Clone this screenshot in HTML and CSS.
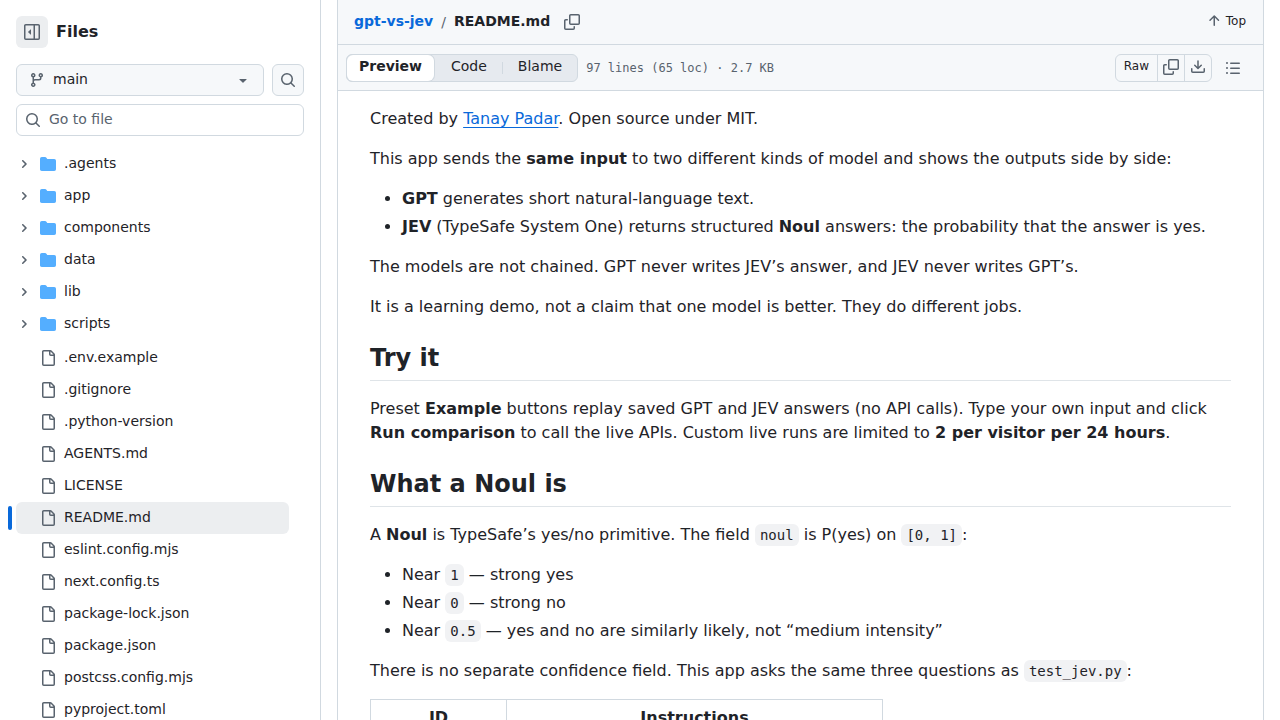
FILE: index.html
```html
<!DOCTYPE html>
<html lang="en">
<head>
<meta charset="utf-8">
<meta name="viewport" content="width=device-width, initial-scale=1">
<title>gpt-vs-jev/README.md</title>
<link rel="stylesheet" href="styles.css">
</head>
<body>
<svg class="sprite" aria-hidden="true">
  <symbol id="i-sidebar" viewBox="0 0 16 16"><path d="m4.177 7.823 2.396-2.396A.25.25 0 0 1 7 5.604v4.792a.25.25 0 0 1-.427.177L4.177 8.177a.25.25 0 0 1 0-.354Z"/><path d="M0 1.75C0 .784.784 0 1.75 0h12.5C15.216 0 16 .784 16 1.75v12.5A1.75 1.75 0 0 1 14.25 16H1.75A1.75 1.75 0 0 1 0 14.25Zm1.75-.25a.25.25 0 0 0-.25.25v12.5c0 .138.112.25.25.25H9.5v-13Zm12.5 13a.25.25 0 0 0 .25-.25V1.75a.25.25 0 0 0-.25-.25H11v13Z"/></symbol>
  <symbol id="i-branch" viewBox="0 0 16 16"><path d="M9.5 3.25a2.25 2.25 0 1 1 3 2.122V6A2.5 2.5 0 0 1 10 8.5H6a1 1 0 0 0-1 1v1.128a2.251 2.251 0 1 1-1.5 0V5.372a2.25 2.25 0 1 1 1.5 0v1.836A2.493 2.493 0 0 1 6 7h4a1 1 0 0 0 1-1v-.628A2.25 2.25 0 0 1 9.5 3.25Zm-6 0a.75.75 0 1 0 1.5 0 .75.75 0 0 0-1.5 0Zm8.25-.75a.75.75 0 1 0 0 1.5.75.75 0 0 0 0-1.5ZM4.25 12a.75.75 0 1 0 0 1.5.75.75 0 0 0 0-1.5Z"/></symbol>
  <symbol id="i-search" viewBox="0 0 16 16"><path d="M10.68 11.74a6 6 0 0 1-7.922-8.982 6 6 0 0 1 8.982 7.922l3.04 3.04a.749.749 0 0 1-.326 1.275.749.749 0 0 1-.734-.215ZM11.5 7a4.499 4.499 0 1 0-8.997 0A4.499 4.499 0 0 0 11.5 7Z"/></symbol>
  <symbol id="i-caret" viewBox="0 0 16 16"><path d="m4.427 7.427 3.396 3.396a.25.25 0 0 0 .354 0l3.396-3.396A.25.25 0 0 0 11.396 7H4.604a.25.25 0 0 0-.177.427Z"/></symbol>
  <symbol id="i-chevron" viewBox="0 0 12 12"><path d="M4.7 10c-.2 0-.4-.1-.5-.2-.3-.3-.3-.8 0-1.1L6.9 6 4.2 3.3c-.3-.3-.3-.8 0-1.1.3-.3.8-.3 1.1 0l3.3 3.2c.3.3.3.8 0 1.1L5.3 9.7c-.2.2-.4.3-.6.3Z"/></symbol>
  <symbol id="i-folder" viewBox="0 0 16 16"><path d="M1.75 1A1.75 1.75 0 0 0 0 2.75v10.5C0 14.216.784 15 1.75 15h12.5A1.75 1.75 0 0 0 16 13.25v-8.5A1.75 1.75 0 0 0 14.25 3H7.5a.25.25 0 0 1-.2-.1l-.9-1.2C6.07 1.26 5.55 1 5 1H1.75Z"/></symbol>
  <symbol id="i-file" viewBox="0 0 16 16"><path d="M2 1.75C2 .784 2.784 0 3.75 0h6.586c.464 0 .909.184 1.237.513l2.914 2.914c.329.328.513.773.513 1.237v9.586A1.75 1.75 0 0 1 13.25 16h-9.5A1.75 1.75 0 0 1 2 14.25Zm1.75-.25a.25.25 0 0 0-.25.25v12.5c0 .138.112.25.25.25h9.5a.25.25 0 0 0 .25-.25V6h-2.75A1.75 1.75 0 0 1 9 4.25V1.5Zm6.75.062V4.25c0 .138.112.25.25.25h2.688l-.011-.013-2.914-2.914-.013-.011Z"/></symbol>
  <symbol id="i-copy" viewBox="0 0 16 16"><path d="M0 6.75C0 5.784.784 5 1.75 5h1.5a.75.75 0 0 1 0 1.5h-1.5a.25.25 0 0 0-.25.25v7.5c0 .138.112.25.25.25h7.5a.25.25 0 0 0 .25-.25v-1.5a.75.75 0 0 1 1.5 0v1.5A1.75 1.75 0 0 1 9.25 16h-7.5A1.75 1.75 0 0 1 0 14.25Z"/><path d="M5 1.75C5 .784 5.784 0 6.75 0h7.5C15.216 0 16 .784 16 1.75v7.5A1.75 1.75 0 0 1 14.25 11h-7.5A1.75 1.75 0 0 1 5 9.25Zm1.75-.25a.25.25 0 0 0-.25.25v7.5c0 .138.112.25.25.25h7.5a.25.25 0 0 0 .25-.25v-7.5a.25.25 0 0 0-.25-.25Z"/></symbol>
  <symbol id="i-download" viewBox="0 0 16 16"><path d="M2.75 14A1.75 1.75 0 0 1 1 12.25v-2.5a.75.75 0 0 1 1.5 0v2.5c0 .138.112.25.25.25h10.5a.25.25 0 0 0 .25-.25v-2.5a.75.75 0 0 1 1.5 0v2.5A1.75 1.75 0 0 1 13.25 14Z"/><path d="M7.25 7.689V2a.75.75 0 0 1 1.5 0v5.689l1.97-1.969a.749.749 0 1 1 1.06 1.06l-3.25 3.25a.749.749 0 0 1-1.06 0L4.22 6.78a.749.749 0 1 1 1.06-1.06l1.97 1.969Z"/></symbol>
  <symbol id="i-list" viewBox="0 0 16 16"><path d="M5.75 2.5h8.5a.75.75 0 0 1 0 1.5h-8.5a.75.75 0 0 1 0-1.5Zm0 5h8.5a.75.75 0 0 1 0 1.5h-8.5a.75.75 0 0 1 0-1.5Zm0 5h8.5a.75.75 0 0 1 0 1.5h-8.5a.75.75 0 0 1 0-1.5ZM2 14a1 1 0 1 1 0-2 1 1 0 0 1 0 2Zm1-6a1 1 0 1 1-2 0 1 1 0 0 1 2 0ZM2 4a1 1 0 1 1 0-2 1 1 0 0 1 0 2Z"/></symbol>
  <symbol id="i-up" viewBox="0 0 16 16"><path d="M3.47 7.78a.75.75 0 0 1 0-1.06l4.25-4.25a.75.75 0 0 1 1.06 0l4.25 4.25a.751.751 0 0 1-.018 1.042.751.751 0 0 1-1.042.018L9 4.81v7.44a.75.75 0 0 1-1.5 0V4.81L4.53 7.78a.75.75 0 0 1-1.06 0Z"/></symbol>
</svg>

<div class="layout">
  <aside class="sidebar">
    <div class="sidebar-head">
      <button class="icon-button filled" type="button" aria-label="Collapse file tree"><svg class="icon"><use href="#i-sidebar"/></svg></button>
      <h2 class="sidebar-title">Files</h2>
    </div>
    <div class="branch-row">
      <div class="field branch">
        <svg class="icon"><use href="#i-branch"/></svg>
        <select class="branch-select" aria-label="Branch"><option>main</option></select>
        <svg class="icon"><use href="#i-caret"/></svg>
      </div>
      <button class="icon-button outlined" type="button" aria-label="Search this repository"><svg class="icon"><use href="#i-search"/></svg></button>
    </div>
    <div class="field finder">
      <svg class="icon"><use href="#i-search"/></svg>
      <input class="finder-input" type="text" placeholder="Go to file" aria-label="Go to file">
    </div>
    <nav class="tree" aria-label="File tree">
      <ul class="tree-group">
        <li><a class="row" href="#"><svg class="chevron"><use href="#i-chevron"/></svg><svg class="icon folder"><use href="#i-folder"/></svg><span class="row-name">.agents</span></a></li>
        <li><a class="row" href="#"><svg class="chevron"><use href="#i-chevron"/></svg><svg class="icon folder"><use href="#i-folder"/></svg><span class="row-name">app</span></a></li>
        <li><a class="row" href="#"><svg class="chevron"><use href="#i-chevron"/></svg><svg class="icon folder"><use href="#i-folder"/></svg><span class="row-name">components</span></a></li>
        <li><a class="row" href="#"><svg class="chevron"><use href="#i-chevron"/></svg><svg class="icon folder"><use href="#i-folder"/></svg><span class="row-name">data</span></a></li>
        <li><a class="row" href="#"><svg class="chevron"><use href="#i-chevron"/></svg><svg class="icon folder"><use href="#i-folder"/></svg><span class="row-name">lib</span></a></li>
        <li><a class="row" href="#"><svg class="chevron"><use href="#i-chevron"/></svg><svg class="icon folder"><use href="#i-folder"/></svg><span class="row-name">scripts</span></a></li>
      </ul>
      <ul class="tree-group">
        <li><a class="row file" href="#"><svg class="icon"><use href="#i-file"/></svg><span class="row-name">.env.example</span></a></li>
        <li><a class="row file" href="#"><svg class="icon"><use href="#i-file"/></svg><span class="row-name">.gitignore</span></a></li>
        <li><a class="row file" href="#"><svg class="icon"><use href="#i-file"/></svg><span class="row-name">.python-version</span></a></li>
        <li><a class="row file" href="#"><svg class="icon"><use href="#i-file"/></svg><span class="row-name">AGENTS.md</span></a></li>
        <li><a class="row file" href="#"><svg class="icon"><use href="#i-file"/></svg><span class="row-name">LICENSE</span></a></li>
        <li><a class="row file current" href="#" aria-current="page"><svg class="icon"><use href="#i-file"/></svg><span class="row-name">README.md</span></a></li>
        <li><a class="row file" href="#"><svg class="icon"><use href="#i-file"/></svg><span class="row-name">eslint.config.mjs</span></a></li>
        <li><a class="row file" href="#"><svg class="icon"><use href="#i-file"/></svg><span class="row-name">next.config.ts</span></a></li>
        <li><a class="row file" href="#"><svg class="icon"><use href="#i-file"/></svg><span class="row-name">package-lock.json</span></a></li>
        <li><a class="row file" href="#"><svg class="icon"><use href="#i-file"/></svg><span class="row-name">package.json</span></a></li>
        <li><a class="row file" href="#"><svg class="icon"><use href="#i-file"/></svg><span class="row-name">postcss.config.mjs</span></a></li>
        <li><a class="row file" href="#"><svg class="icon"><use href="#i-file"/></svg><span class="row-name">pyproject.toml</span></a></li>
      </ul>
    </nav>
  </aside>

  <main class="content">
    <section class="file-view">
      <header class="path-bar">
        <div class="crumbs">
          <a class="crumb-link" href="#">gpt-vs-jev</a>
          <span class="crumb-sep">/</span>
          <h1 class="crumb-file">README.md</h1>
          <button class="bare-button copy-path" type="button" aria-label="Copy path"><svg class="icon"><use href="#i-copy"/></svg></button>
        </div>
        <a class="top-link" href="#"><svg class="icon"><use href="#i-up"/></svg><span>Top</span></a>
      </header>
      <div class="tool-bar">
        <div class="segments">
          <button class="segment active" type="button" aria-pressed="true">Preview</button>
          <button class="segment" type="button">Code</button>
          <span class="segment-divider"></span>
          <button class="segment" type="button">Blame</button>
        </div>
        <span class="file-meta">97 lines (65 loc) · 2.7 KB</span>
        <div class="actions">
          <button class="action raw" type="button">Raw</button>
          <button class="action" type="button" aria-label="Copy raw file"><svg class="icon"><use href="#i-copy"/></svg></button>
          <button class="action" type="button" aria-label="Download raw file"><svg class="icon"><use href="#i-download"/></svg></button>
        </div>
        <button class="bare-button outline" type="button" aria-label="Outline"><svg class="icon"><use href="#i-list"/></svg></button>
      </div>
      <article class="markdown">
        <p>Created by <a href="#">Tanay Padar</a>. Open source under MIT.</p>
        <p>This app sends the <strong>same input</strong> to two different kinds of model and shows the outputs side by side:</p>
        <ul>
          <li><strong>GPT</strong> generates short natural-language text.</li>
          <li><strong>JEV</strong> (TypeSafe System One) returns structured <strong>Noul</strong> answers: the probability that the answer is yes.</li>
        </ul>
        <p>The models are not chained. GPT never writes JEV’s answer, and JEV never writes GPT’s.</p>
        <p>It is a learning demo, not a claim that one model is better. They do different jobs.</p>
        <h2>Try it</h2>
        <p>Preset <strong>Example</strong> buttons replay saved GPT and JEV answers (no API calls). Type your own input and click <strong>Run comparison</strong> to call the live APIs. Custom live runs are limited to <strong>2 per visitor per 24 hours</strong>.</p>
        <h2>What a Noul is</h2>
        <p>A <strong>Noul</strong> is TypeSafe’s yes/no primitive. The field <code>noul</code> is P(yes) on <code>[0, 1]</code>:</p>
        <ul>
          <li>Near <code>1</code> — strong yes</li>
          <li>Near <code>0</code> — strong no</li>
          <li>Near <code>0.5</code> — yes and no are similarly likely, not “medium intensity”</li>
        </ul>
        <p>There is no separate confidence field. This app asks the same three questions as <code>test_jev.py</code>:</p>
        <table>
          <thead><tr><th class="col-id" scope="col">ID</th><th class="col-text" scope="col">Instructions</th></tr></thead>
        </table>
      </article>
    </section>
  </main>
</div>
</body>
</html>
```
FILE: styles.css
```css
:root {
  --fg: #1f2328;
  --muted: #59636e;
  --line: #d1d9e0;
  --line-soft: #dfe4e8;
  --subtle: #f6f8fa;
  --link: #0969da;
  --sans: "DejaVu Sans", sans-serif;
  --mono: "DejaVu Sans Mono", monospace;
}

* { box-sizing: border-box; }

body {
  margin: 0;
  color: var(--fg);
  background: #fff;
  font: 14px/20px var(--sans);
}

button, input, select { font: inherit; color: inherit; }
button { cursor: pointer; }
ul { list-style: none; margin: 0; padding: 0; }
a { color: var(--link); text-decoration: none; }

.sprite { display: none; }
.icon { flex: none; display: block; width: 16px; height: 16px; fill: var(--muted); }

.layout {
  display: grid;
  grid-template-columns: 321px minmax(0, 1fr);
  height: 100vh;
  overflow: hidden;
}

/* File tree */
.sidebar {
  padding: 16px 16px 0;
  border-right: 1px solid var(--line);
  overflow: hidden;
}
.sidebar-head { display: flex; align-items: center; gap: 8px; margin-bottom: 16px; }
.sidebar-title { margin: 0; font-size: 16px; line-height: 24px; font-weight: 700; }

.icon-button {
  display: flex;
  flex: none;
  align-items: center;
  justify-content: center;
  width: 32px;
  height: 32px;
  padding: 0;
  border: 0;
  border-radius: 6px;
}
.filled { background: #eceef0; }
.outlined { border: 1px solid var(--line); background: var(--subtle); }

.branch-row { display: flex; gap: 8px; margin-bottom: 8px; }
.field {
  display: flex;
  align-items: center;
  gap: 8px;
  height: 32px;
  border: 1px solid var(--line);
  border-radius: 6px;
}
.branch { flex: 1; padding: 0 12px; background: var(--subtle); }
.branch-select, .finder-input {
  flex: 1;
  min-width: 0;
  height: 28px;
  padding: 0 0 2px;
  border: 0;
  outline: 0;
  background: none;
  appearance: none;
}
.finder { padding: 0 8px; }
.finder-input::placeholder { color: var(--muted); opacity: 1; }

.tree { display: grid; gap: 2px; margin: 12px 15px 0 0; }
.row {
  position: relative;
  display: flex;
  align-items: center;
  gap: 8px;
  height: 32px;
  border-radius: 6px;
  color: var(--fg);
}
.file { padding-left: 24px; }
.row-name { padding-bottom: 2px; }
.chevron { flex: none; width: 12px; height: 12px; margin: 0 2px; fill: var(--muted); }
.folder { fill: #54aeff; }
.current { background: #eceef0; }
.current::before {
  content: "";
  position: absolute;
  left: -8px;
  top: 4px;
  width: 4px;
  height: 24px;
  border-radius: 6px;
  background: var(--link);
}

/* File view */
.content { padding: 0 16px; overflow: hidden; }
.file-view {
  min-height: 100%;
  border: solid var(--line);
  border-width: 0 1px;
}
.path-bar, .tool-bar {
  display: flex;
  align-items: center;
  background: var(--subtle);
  border-bottom: 1px solid var(--line);
}
.path-bar { justify-content: space-between; height: 45px; padding: 0 17px 0 16px; }
.crumbs { display: flex; align-items: center; gap: 8px; }
.crumb-link, .crumb-file { margin: 0; font-size: 14px; line-height: 20px; font-weight: 700; padding-bottom: 2px; }
.crumb-sep { color: var(--muted); }
.bare-button { padding: 0; border: 0; background: none; }
.copy-path { margin-left: 6px; }
.top-link { display: flex; align-items: center; gap: 4px; padding-bottom: 2px; font-size: 12px; color: var(--fg); }

.tool-bar { gap: 8px; height: 46px; padding: 0 22px 0 8px; }
.segments {
  display: flex;
  align-items: center;
  height: 28px;
  border: 1px solid var(--line);
  border-radius: 6px;
  background: #e6eaef;
}
.segment {
  height: 26px;
  padding: 0 15px 3px;
  border: 0;
  border-radius: 6px;
  background: none;
}
.active {
  margin-right: 2px;
  padding: 0 12px 3px;
  background: #fff;
  box-shadow: 0 0 0 1px var(--line);
  font-weight: 700;
}
.segment-divider { width: 1px; height: 12px; background: var(--line); }
.file-meta { flex: 1; color: var(--muted); font: 12px/20px var(--mono); }
.actions {
  display: flex;
  height: 28px;
  margin-right: 5px;
  border: 1px solid var(--line);
  border-radius: 6px;
  font-size: 12px;
}
.action { padding: 0 5px 2px; border: 0; background: none; }
.action + .action { border-left: 1px solid var(--line); }
.raw { padding: 0 8px 4px; }

/* Rendered document */
.markdown { padding: 16px 32px; font-size: 16px; line-height: 24px; }
.markdown p, .markdown ul { margin: 0 0 16px; }
.markdown a { text-decoration: underline; text-underline-offset: 3px; }
.markdown ul { padding-left: 32px; list-style: disc; }
.markdown li + li { margin-top: 4px; }
.markdown h2 {
  margin: 24px 0 16px;
  padding-bottom: 7px;
  border-bottom: 1px solid var(--line-soft);
  font-size: 24px;
  line-height: 30px;
  font-weight: 700;
}
.markdown code {
  padding: 3px 5px;
  border-radius: 6px;
  background: #f1f2f4;
  font: 14px/20px var(--mono);
}
.markdown table { border-collapse: collapse; }
.markdown th { padding: 6px 13px; border: 1px solid var(--line); }
.col-id { min-width: 136px; }
.col-text { min-width: 376px; }
```
